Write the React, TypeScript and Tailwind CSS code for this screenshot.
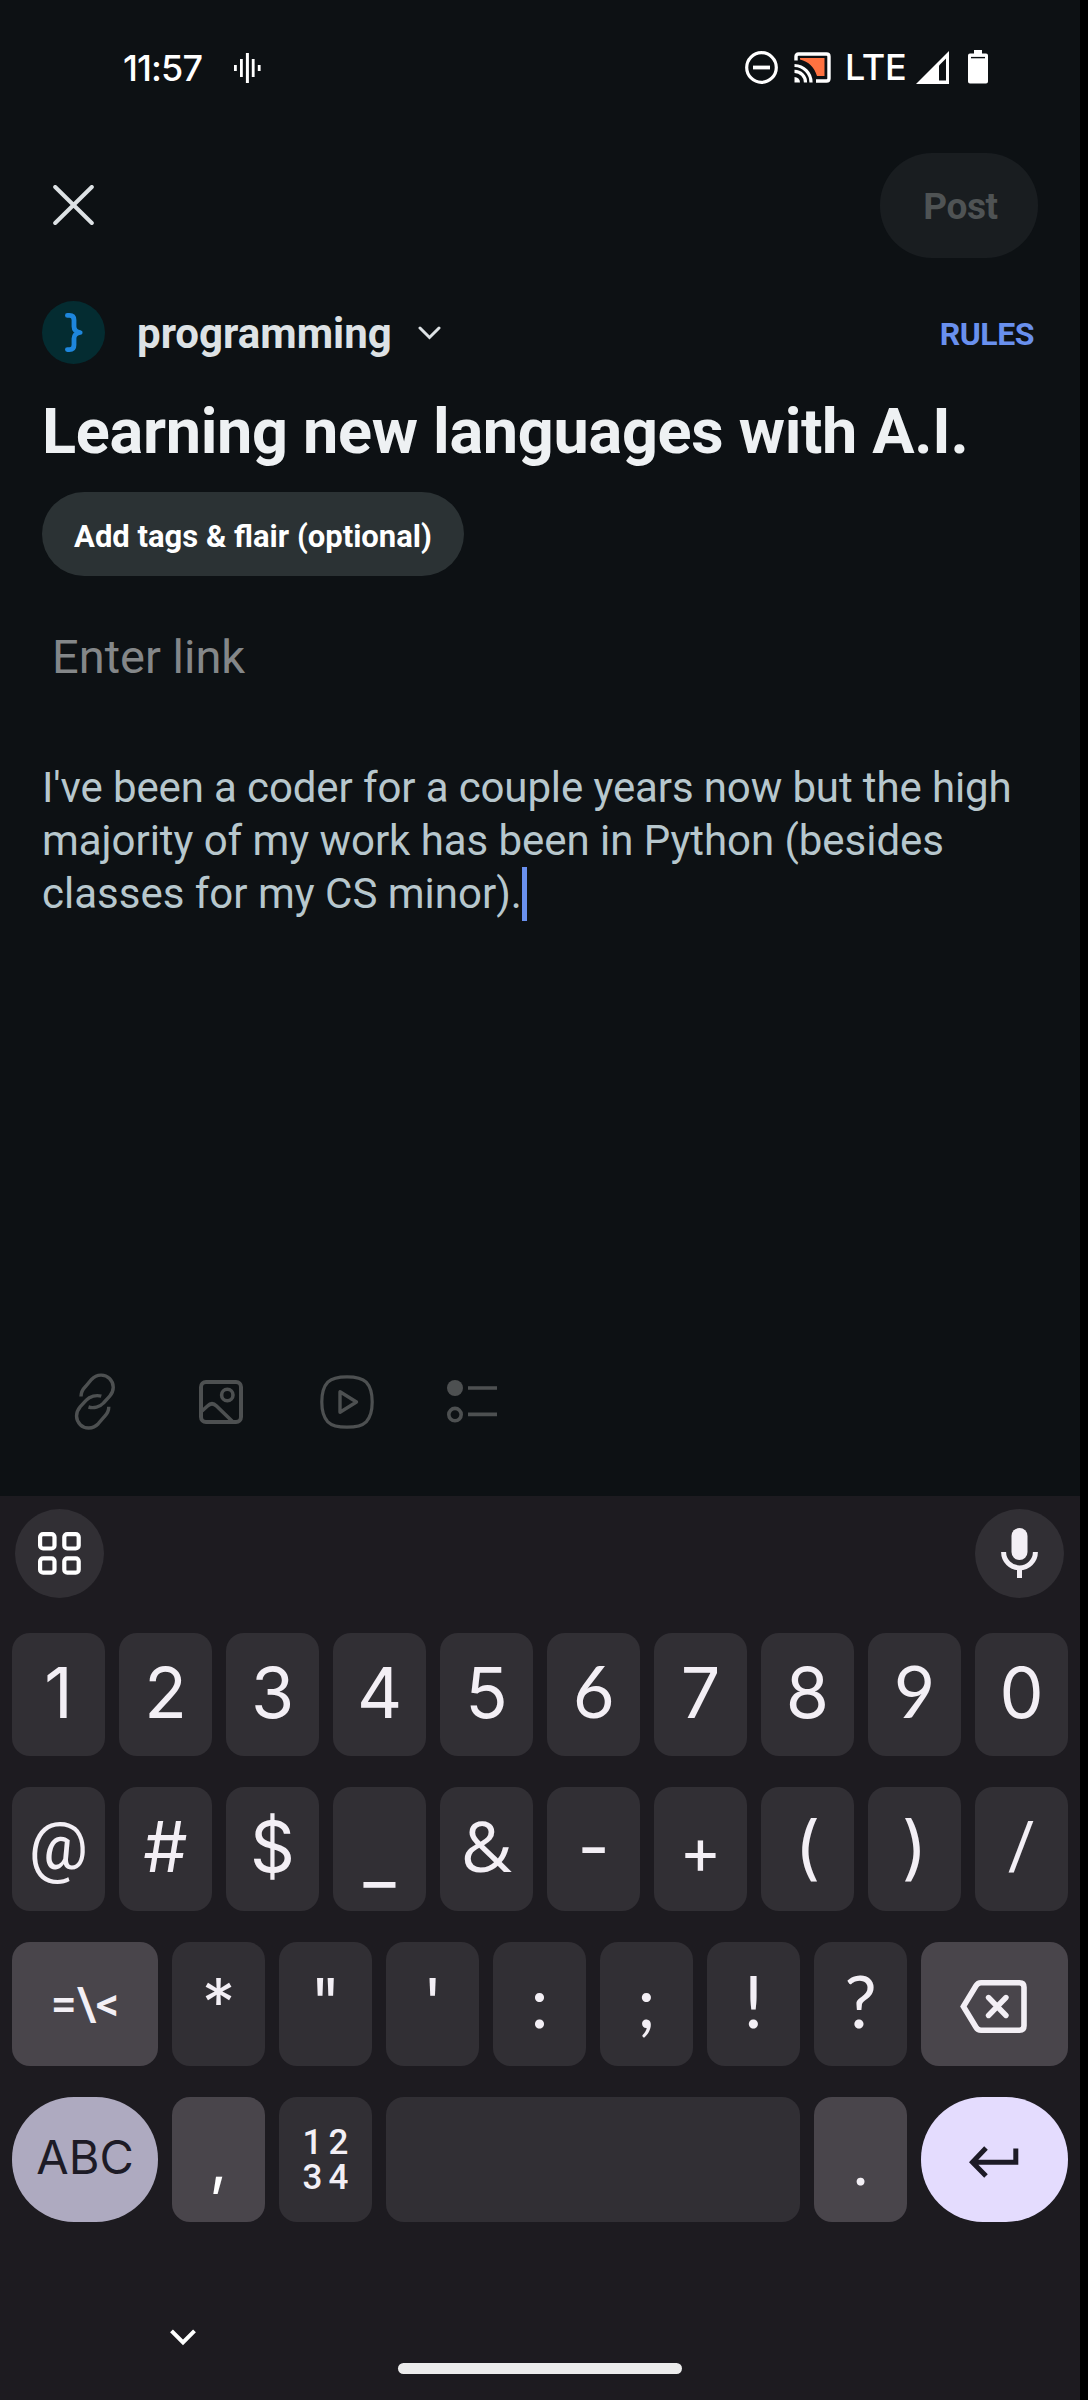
import type { ReactNode } from 'react';

type KeyDef = { label: string; cls?: string };

const numberRow: KeyDef[] = [
  { label: '1' },
  { label: '2' },
  { label: '3' },
  { label: '4' },
  { label: '5' },
  { label: '6', cls: 'font-[Lato,sans-serif] text-[71px] pb-2' },
  { label: '7' },
  { label: '8' },
  { label: '9', cls: 'font-[Lato,sans-serif] text-[71px] pb-2' },
  { label: '0' },
];

const symbolRow: KeyDef[] = [
  { label: '@', cls: 'font-[Roboto,sans-serif] text-[66px] pb-1' },
  { label: '#' },
  { label: '$' },
  { label: '_', cls: 'text-[70px] pt-4' },
  { label: '&', cls: 'font-[Open_Sans,sans-serif] text-[70px] pb-2' },
  { label: '-' },
  { label: '+', cls: 'text-[64px] pt-1' },
  { label: '(' },
  { label: ')' },
  { label: '/', cls: 'font-[Roboto,sans-serif] text-[66px] pb-1' },
];

const punctuationRow: KeyDef[] = [
  { label: '*', cls: 'text-[66px] pb-1' },
  { label: '"', cls: 'text-[64px] pb-1' },
  { label: "'", cls: 'text-[64px] pb-1' },
  { label: ':', cls: 'font-[Lato,sans-serif] text-[72px] pb-2' },
  { label: ';', cls: 'font-[Lato,sans-serif] text-[72px] pb-2' },
  { label: '!', cls: 'font-[Lato,sans-serif] text-[72px] pb-2' },
  { label: '?', cls: 'font-[Lato,sans-serif] text-[72px] pb-2' },
];

function Key({ children, className = '' }: { children?: ReactNode; className?: string }) {
  return (
    <button type="button" className={`flex h-full shrink-0 items-center justify-center leading-none ${className}`}>
      {children}
    </button>
  );
}

function GlyphKey({ label, cls }: KeyDef) {
  return (
    <Key className={`w-[93px] rounded-[18px] bg-[#312f34] text-[#f3eff5] ${cls ?? 'text-[70px] pb-1'}`}>{label}</Key>
  );
}

function StatusBar() {
  return (
    <div className="flex h-[136px] items-center pl-[123px] pr-[92px] text-white">
      <span className="w-[111px] text-[36px] leading-none font-medium tracking-[-0.9px]">11:57</span>
      <svg width="27" height="30" viewBox="0 0 27 30" fill="#fff">
        <rect x="0" y="12" width="2.8" height="6" />
        <rect x="6" y="6" width="2.8" height="18" />
        <rect x="11.9" y="0" width="3" height="30" />
        <rect x="17.8" y="6" width="2.8" height="18" />
        <rect x="23.8" y="12" width="2.8" height="6" />
      </svg>
      <div className="ml-auto flex items-center pb-[2px]">
        <svg width="33" height="33" viewBox="0 0 33 33" fill="none" stroke="#fff">
          <circle cx="16.5" cy="16.5" r="14.8" strokeWidth="3.2" />
          <path d="M8 16.5H25" strokeWidth="3.8" />
        </svg>
        <svg className="ml-4" width="37" height="31" viewBox="0 0 37 31" fill="none">
          <path d="M6 6H30.5V24H23C20.5 15.5 14.5 9.5 6 7.5Z" fill="#ff7240" />
          <path d="M2 8.5V4.5Q2 2 4.5 2H32.5Q35 2 35 4.5V26.5Q35 29 32.5 29H22" stroke="#fff" strokeWidth="3.4" />
          <path d="M.5 13.5A16.8 16.8 0 0 1 17 30.5M.5 19.3A11 11 0 0 1 11.5 30.5" stroke="#fff" strokeWidth="3.2" />
          <path d="M.5 25A5.5 5.5 0 0 1 6 30.5H.5Z" fill="#fff" />
        </svg>
        <span className="ml-[14px] w-[62px] text-[36px] leading-none font-medium tracking-[-0.2px]">LTE</span>
        <svg className="ml-[9px]" width="33" height="33" viewBox="0 0 33 33">
          <path d="M0 33L33 0V33Z" fill="#fff" />
          <path d="M23 14.5L30 7.5V29.5H23Z" fill="#0d1114" />
        </svg>
        <svg className="ml-[19px]" width="20" height="34" viewBox="0 0 20 34">
          <path d="M6 0H14V3.5H18Q20 3.5 20 5.5V31.5Q20 33.5 18 33.5H2Q0 33.5 0 31.5V5.5Q0 3.5 2 3.5H6Z" fill="#fff" />
          <path d="M3 7.6H17" stroke="#0d1114" strokeWidth="1.4" />
        </svg>
      </div>
    </div>
  );
}

function AttachmentBar() {
  const loop = 'M11 26.5C11 22 12 20 15.5 16.5L21.5 9.5C27 3.8 35 4 39.5 8.5C44.5 13.5 44.5 20.5 39.5 26.5L33.5 33C30 37 23.5 38.5 18.5 37';
  return (
    <div className="mt-auto mb-[63px] flex h-[63px] items-center pl-[32px]">
      <div className="flex w-[126px] justify-center">
        <svg width="50" height="63" viewBox="0 0 50 63" fill="none" stroke="#4d5051" strokeWidth="3.4">
          <path d={loop} />
          <path d={loop} transform="rotate(180 24.9 31.6)" />
        </svg>
      </div>
      <div className="flex w-[126px] justify-center">
        <svg width="44" height="44" viewBox="0 0 44 44" fill="none" stroke="#4d5051" strokeWidth="4">
          <rect x="2" y="2" width="40" height="40" rx="5" />
          <circle cx="28.3" cy="15" r="5.7" strokeWidth="3.6" />
          <path d="M3 31L8.5 26Q13 21.5 17.5 26L33.5 41.5" strokeWidth="3.6" />
        </svg>
      </div>
      <div className="flex w-[126px] justify-center">
        <svg width="56" height="56" viewBox="0 0 56 56" fill="none" stroke="#4d5051" strokeWidth="3.2">
          <path d="M28 2.8C37 2.8 44 5 47.2 8.2C50.8 12 53.2 19 53.2 28S50.8 44 47.2 47.8C44 51 37 53.2 28 53.2S12 51 8.8 47.8C5.2 44 2.8 37 2.8 28S5.2 12 8.8 8.2C12 5 19 2.8 28 2.8Z" />
          <path d="M21 17.8V38.2L37.5 28Z" strokeLinejoin="round" strokeWidth="3.4" />
        </svg>
      </div>
      <div className="flex w-[124px] justify-center">
        <svg width="50" height="43" viewBox="0 0 50 43" fill="none" stroke="#4d5051" strokeWidth="3.6">
          <circle cx="8" cy="8" r="8" fill="#4d5051" stroke="none" />
          <circle cx="8" cy="34.6" r="6.2" />
          <path d="M21 8H50M21 34.4H50" />
        </svg>
      </div>
    </div>
  );
}

function Keyboard() {
  return (
    <div className="flex h-[904px] flex-col bg-[#1d1b20] text-[#f3eff5]">
      <div className="flex h-[137px] items-start justify-between pt-[13px] pr-[16px] pl-[15px]">
        <button type="button" className="flex size-[89px] items-center justify-center rounded-full bg-[#312f34]">
          <svg width="43" height="43" viewBox="0 0 43 43" fill="none" stroke="#fff" strokeWidth="4.2">
            <rect x="2.1" y="2.1" width="14.4" height="14.4" rx="3" />
            <rect x="26.3" y="2.1" width="14.4" height="14.4" rx="3" />
            <rect x="2.1" y="26.3" width="14.4" height="14.4" rx="3" />
            <rect x="26.3" y="26.3" width="14.4" height="14.4" rx="3" />
          </svg>
        </button>
        <button type="button" className="flex size-[89px] items-center justify-center rounded-full bg-[#312f34] pb-[2px]">
          <svg width="37" height="50" viewBox="0 0 37 50" fill="none" stroke="#f3eff5">
            <rect x="10.5" y="0" width="16" height="32" rx="8" fill="#f3eff5" stroke="none" />
            <path d="M2.6 24A15.9 15.9 0 0 0 34.4 24M18.5 40V50" strokeWidth="5" />
          </svg>
        </button>
      </div>

      <div className="flex h-[123px] gap-[14px] pl-3">
        {numberRow.map((k) => (
          <GlyphKey key={k.label} {...k} />
        ))}
      </div>
      <div className="mt-[31px] flex h-[124px] gap-[14px] pl-3">
        {symbolRow.map((k) => (
          <GlyphKey key={k.label} {...k} />
        ))}
      </div>
      <div className="mt-[31px] flex h-[124px] gap-[14px] pl-3">
        <Key className="w-[146px] rounded-[18px] bg-[#49454b] font-[Roboto,sans-serif] text-[46px] font-medium">{'=\\<'}</Key>
        {punctuationRow.map((k) => (
          <GlyphKey key={k.label} {...k} />
        ))}
        <Key className="w-[147px] rounded-[18px] bg-[#49454b] pt-[5px] pr-[3px]">
          <svg width="67" height="53" viewBox="0 0 67 53" fill="none" stroke="#f3eff5" strokeWidth="5.6">
            <path d="M3.4 26.5L16 5.8Q17.8 2.8 21 2.8H59.5Q64 2.8 64 7.3V45.7Q64 50.2 59.5 50.2H21Q17.8 50.2 16 47.2Z" />
            <path d="M28.5 17.5L46 35.5M46 17.5L28.5 35.5" strokeLinecap="round" strokeWidth="5.4" />
          </svg>
        </Key>
      </div>
      <div className="mt-[31px] flex h-[125px] gap-[14px] pl-3">
        <Key className="w-[146px] rounded-[62px] bg-[#aeaac0] pb-[6px] text-[47px] text-[#1d1b26]">ABC</Key>
        <Key className="w-[93px] rounded-[18px] bg-[#49454b] pt-[2px] text-[62px] text-white">,</Key>
        <Key className="w-[93px] rounded-[18px] bg-[#312f34]">
          <span className="grid grid-cols-2 gap-x-[6px] font-[Roboto,sans-serif] text-[35px] leading-[35px] font-medium">
            <span>1</span>
            <span>2</span>
            <span>3</span>
            <span>4</span>
          </span>
        </Key>
        <Key className="w-[414px] rounded-[18px] bg-[#312f34]" />
        <Key className="w-[93px] rounded-[18px] bg-[#49454b] pt-[2px] font-[Lato,sans-serif] text-[62px]">.</Key>
        <Key className="w-[147px] rounded-[62px] bg-[#e4dcfe] pt-[5px] pr-[2px]">
          <svg width="50" height="32" viewBox="0 0 50 32" fill="none" stroke="#1d1b26" strokeWidth="5">
            <path d="M46.8 2.5V16.2H4M17 2L3.4 16.2L17 30" />
          </svg>
        </Key>
      </div>

      <div className="mt-[107px] pl-[170px]">
        <svg width="26" height="17" viewBox="0 0 26 17" fill="none" stroke="#fff" strokeWidth="4">
          <path d="M1.5 1.8L13 13.4L24.5 1.8" />
        </svg>
      </div>
      <div className="mt-[17px] h-[11px] w-[284px] self-center rounded-full bg-[#ececec]" />
    </div>
  );
}

export default function App() {
  return (
    <div className="h-[2400px] w-[1088px] bg-black">
      <div className="flex h-full w-[1080px] flex-col bg-[#0d1114] font-[Inter,sans-serif]">
        <StatusBar />

        <div className="flex h-[138px] items-center justify-between pr-[42px] pl-[53px]">
          <svg width="41" height="40" viewBox="0 0 41 40" fill="none" stroke="#dde2e5" strokeWidth="4" strokeLinecap="round">
            <path d="M2.2 2L38.8 38M38.8 2L2.2 38" />
          </svg>
          <button
            type="button"
            className="flex h-[105px] w-[158px] items-center justify-center rounded-[52px] bg-[#191d20] pt-[3px] pl-[3px] font-[Roboto,sans-serif] text-[37px] leading-none font-bold tracking-[-0.4px] text-[#4f5354]"
          >
            Post
          </button>
        </div>

        <div className="flex h-[117px] items-center pr-[46px] pl-[42px] font-[Roboto,sans-serif]">
          <div className="flex size-[63px] items-center justify-center rounded-full bg-[#042c31]">
            <svg width="18" height="39" viewBox="0 0 18 39" fill="none" stroke="#1e86dc" strokeWidth="4.8" strokeLinejoin="round" strokeLinecap="round">
              <path d="M2.4 2.4H4.5Q9 2.4 9 7V13.5Q9 18.5 15.2 19.5Q9 20.5 9 25.5V32Q9 36.6 4.5 36.6H2.4" />
            </svg>
          </div>
          <span className="ml-[32px] pt-[3px] text-[42px] leading-none font-bold text-[#dde2e5]">programming</span>
          <svg className="ml-[26px]" width="23" height="14" viewBox="0 0 23 14" fill="none" stroke="#dde2e5" strokeWidth="3" strokeLinecap="round">
            <path d="M2 2L11.5 11.5L21 2" />
          </svg>
          <span className="ml-auto pt-[2px] text-[32px] leading-none font-bold tracking-[-0.45px] text-[#6990ee]">RULES</span>
        </div>

        <h1 className="pt-px pl-[42px] font-[Roboto,sans-serif] text-[63px] leading-[79px] font-bold tracking-[-0.31px] text-[#eef1f3]">
          Learning new languages with A.I.
        </h1>

        <button
          type="button"
          className="mt-[21px] ml-[42px] flex h-[84px] w-[422px] items-center justify-center rounded-full bg-[#2b3234] pt-[4px] font-[Roboto,sans-serif] text-[31px] leading-none font-bold text-white"
        >
          Add tags &amp; flair (optional)
        </button>

        <div className="mt-[40px] pl-[52px] font-[Roboto,sans-serif] text-[47px] leading-[81px] text-[#848789]">Enter link</div>

        <p className="mt-[64px] pl-[42px] font-[Roboto,sans-serif] text-[42px] leading-[53px] text-[#b7c7cd]">
          <span className="block tracking-[-0.12px]">I've been a coder for a couple years now but the high</span>
          <span className="block tracking-[-0.05px]">majority of my work has been in Python (besides</span>
          <span className="flex items-center">
            classes for my CS minor).
            <span className="-my-1 h-[54px] w-[5px] bg-[#6990ee]" />
          </span>
        </p>

        <AttachmentBar />
        <Keyboard />
      </div>
    </div>
  );
}
